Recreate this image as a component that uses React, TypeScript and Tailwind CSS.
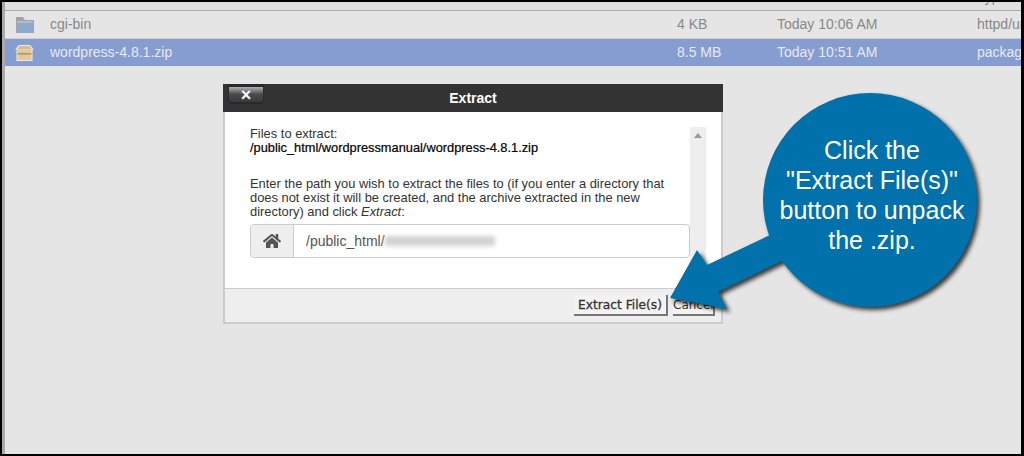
import { FaHome } from "react-icons/fa";

function FolderIcon() {
  return (
    <svg width="18" height="16" viewBox="0 0 18 16" className="shrink-0">
      <path d="M0 0h7l2 3h9v13H0z" fill="#a3a3a3" />
      <path d="M1 4h16v11.500H1z" fill="#8fa9cb" />
      <path d="M1 4h16v2H1z" fill="#a9bdd8" />
    </svg>
  );
}

function PackageIcon() {
  return (
    <svg width="19" height="16" viewBox="0 0 19 16" className="shrink-0">
      <path d="M4 0h11l4 4.500h-1.500V16H1.500V4.500H0z" fill="#efe9d8" />
      <path d="M4.500 1h10l2.500 3.500H2z" fill="#d9bb8d" />
      <path d="M2.500 5h14v10h-14z" fill="#e2c89b" />
      <path d="M2.500 8h14v1.500h-14z" fill="#b8925c" />
    </svg>
  );
}

function FileRow({ name, size, time, type, selected }: { name: string; size: string; time: string; type: string; selected?: boolean }) {
  return (
    <div
      className={`grid grid-cols-[45px_627px_100px_200px_44px] items-center overflow-hidden text-[14px] whitespace-nowrap ${
        selected ? "h-[27px] bg-[#869dd1] text-[#e6e9f2]" : "h-[28px] border-b border-[#cfcfcf] text-[#888888]"
      }`}
    >
      <div className={selected ? "pl-[10px]" : "pl-[11px]"}>{selected ? <PackageIcon /> : <FolderIcon />}</div>
      <div>{name}</div>
      <div>{size}</div>
      <div>{time}</div>
      <div className="overflow-hidden">{type}</div>
    </div>
  );
}

function ExtractModal() {
  return (
    <div className="absolute left-[223px] top-[84px] flex h-[240px] w-[500px] flex-col border-x-2 border-b-2 border-[#cccccc] bg-white text-[12.900px] leading-[14px] text-[#333333]">
      <div className="relative -mx-[2px] flex h-[28px] shrink-0 items-center justify-center bg-[#333333] text-[14px] font-bold text-white">
        Extract
        <div className="absolute left-[5px] top-0 h-[20px] w-[36px] rounded-b-[4px] bg-[#262a2e] px-[1px]">
          <div className="mt-[3px] flex h-[15px] items-center justify-center rounded-b-[3px] bg-gradient-to-b from-[#b0b0b0] via-[#4a4a4a] to-[#3a3a3a] text-[18px] leading-none font-bold text-white">
            ×
          </div>
        </div>
      </div>
      <div className="relative flex-1 px-[25px] pt-[15px]">
        <p>Files to extract:</p>
        <p className="text-[12.800px] text-black [-webkit-text-stroke:0.2px_black]">/public_html/wordpressmanual/wordpress-4.8.1.zip</p>
        <p className="mt-[22px] w-[440px]">
          Enter the path you wish to extract the files to (if you enter a directory that does not exist it will be created, and the archive extracted in the new directory) and click <em>Extract</em>:
        </p>
        <div className="mt-[5px] flex h-[34px] w-[440px] rounded-[4px] border border-[#cccccc]">
          <div className="flex w-[43px] items-center justify-center rounded-l-[4px] border-r border-[#cccccc] bg-[#eeeeee]">
            <FaHome className="h-[18px] w-[18px] text-[#555555]" />
          </div>
          <div className="flex items-center pl-[12px] text-[14px] text-[#555555]">
            /public_html/
            <span className="h-[10px] w-[110px] bg-[#d2d2d2] blur-[2px]" />
          </div>
        </div>
        <div className="absolute left-[465px] top-[15px] bottom-0 w-[16px] bg-[#eeeeee]">
          <div className="mx-auto mt-[6px] h-0 w-0 border-x-[4px] border-b-[5px] border-x-transparent border-b-[#9a9a9a]" />
        </div>
      </div>
      <div className="flex h-[34px] shrink-0 items-start justify-end gap-[5px] border-t border-[#cccccc] bg-[#eeeeee] pr-[6px] pt-[6px] font-['DejaVu_Sans',sans-serif] text-[#333333]">
        <button className="h-[21px] w-[94px] border-r-2 border-b-2 border-[#777777] bg-[#f2f2f2] text-[12.200px] [-webkit-text-stroke:0.3px_#333333]">Extract File(s)</button>
        <button className="h-[21px] w-[42px] border-r-2 border-b-2 border-[#777777] bg-[#f2f2f2] text-[12px]">Cancel</button>
      </div>
    </div>
  );
}

function Callout() {
  return (
    <>
      <svg className="absolute left-0 top-0 drop-shadow-[3px_3px_2px_rgba(0,0,0,0.75)]" width="1024" height="456" viewBox="0 0 1024 456">
        <circle cx="870" cy="200" r="107" fill="#0071aa" />
        <path d="M670 298L697 250L707 265L772 234L786 259L718 292L727 309Z" fill="#0071aa" />
      </svg>
      <div className="absolute left-[765px] top-[135px] w-[214px] text-center text-[25px] leading-[30px] text-white">
        Click the
        <br />
        "Extract File(s)"
        <br />
        button to unpack
        <br />
        the .zip.
      </div>
    </>
  );
}

export default function App() {
  return (
    <div className="relative h-[456px] w-[1024px] overflow-hidden bg-black pt-[2px] pb-[2px] pl-[2px] pr-[3px] font-['Liberation_Sans',Arial,sans-serif]">
      <div className="flex h-full border-l-[3px] border-[#aaaaaa] bg-[#e5e5e5]">
        <div className="min-w-0 flex-1 overflow-hidden">
          <div className="h-[9px] overflow-hidden border-b-[1px] border-[#aaaaaa] bg-[#e0e0e0] pl-[972px] text-[14px] leading-[14px] text-[#888888]">
            <div className="-mt-[12px]">Type</div>
          </div>
          <FileRow name="cgi-bin" size="4 KB" time="Today 10:06 AM" type="httpd/unix-directory" />
          <FileRow name="wordpress-4.8.1.zip" size="8.5 MB" time="Today 10:51 AM" type="package/x-generic" selected />
        </div>
      </div>
      <ExtractModal />
      <Callout />
    </div>
  );
}
